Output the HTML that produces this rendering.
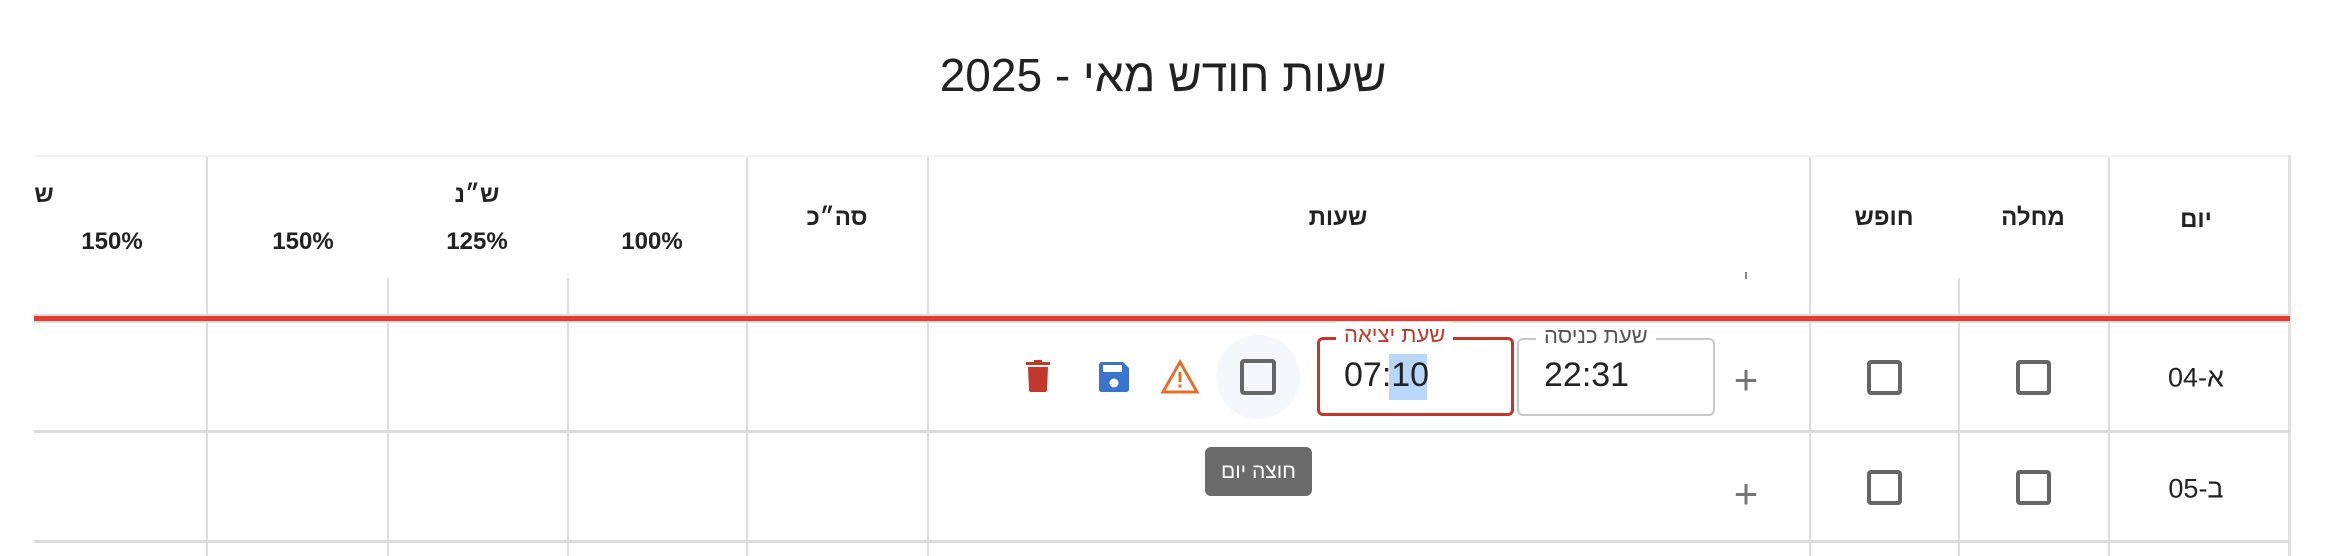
<!DOCTYPE html>
<html><head><meta charset="utf-8"><style>
*{margin:0;padding:0;box-sizing:border-box}
body{width:2344px;height:556px;background:#fff;position:relative;overflow:hidden;font-family:"Liberation Sans","Noto Sans CJK SC",sans-serif;color:#222}
.a{position:absolute}
.t{position:absolute;white-space:nowrap;transform:translate(-50%,-50%)}
.vl{position:absolute;width:2px;background:#dedede}
.hl{position:absolute;height:3px;background:#dcdcdc;left:34px;width:2256px}
.h{font-weight:bold;font-size:24px}
.cb{position:absolute;width:35px;height:35px;border:4px solid #666;border-radius:4px}
.plus{position:absolute;font-size:42px;color:#777;font-weight:300;transform:translate(-50%,-50%)}
</style></head><body>
<div class="t" style="left:1163px;top:75px;font-size:46px">שעות חודש מאי - 2025</div>

<div class="a" style="left:34px;top:155px;width:2256px;height:2px;background:#f3f3f3"></div>
<div class="a" style="left:2288px;top:155px;width:3px;height:401px;background:#e2e2e2"></div>

<div class="vl" style="left:206px;top:157px;height:399px"></div>
<div class="vl" style="left:746px;top:157px;height:399px"></div>
<div class="vl" style="left:927px;top:157px;height:399px"></div>
<div class="vl" style="left:1809px;top:157px;height:399px"></div>
<div class="vl" style="left:2108px;top:157px;height:399px"></div>
<div class="vl" style="left:387px;top:278px;height:278px"></div>
<div class="vl" style="left:567px;top:278px;height:278px"></div>
<div class="vl" style="left:1958px;top:278px;height:278px"></div>
<div class="a" style="left:1745px;top:272px;width:2px;height:7px;background:#888"></div>

<div class="t h" style="left:44px;top:195px">ש</div>
<div class="t h" style="left:112px;top:242px">150%</div>
<div class="t h" style="left:303px;top:242px">150%</div>
<div class="t h" style="left:477px;top:195px">ש״נ</div>
<div class="t h" style="left:477px;top:242px">125%</div>
<div class="t h" style="left:652px;top:242px">100%</div>
<div class="t h" style="left:837px;top:218px">סה״כ</div>
<div class="t h" style="left:1338px;top:218px">שעות</div>
<div class="t h" style="left:1884px;top:218px">חופש</div>
<div class="t h" style="left:2033px;top:218px">מחלה</div>
<div class="t h" style="left:2196px;top:220px">יום</div>

<div class="a" style="left:34px;top:314px;width:2256px;height:9px;background:#dcdcdc"></div>
<div class="a" style="left:34px;top:316px;width:2256px;height:5px;background:#ea3a2b"></div>
<div class="hl" style="top:430px"></div>
<div class="hl" style="top:540px"></div>

<div class="t" style="left:2196px;top:378px;font-size:27px">א-04</div>
<div class="cb" style="left:2016px;top:360px"></div>
<div class="cb" style="left:1867px;top:360px"></div>
<div class="plus" style="left:1746px;top:380px">+</div>

<div class="a" style="left:1517px;top:338px;width:198px;height:78px;border:2px solid #c8c8c8;border-radius:6px"></div>
<div class="a" style="left:1536px;top:323px;padding:0 8px;background:#fff;font-size:22px;color:#555">שעת כניסה</div>
<div class="a" style="left:1544px;top:356px;font-size:34px">22:31</div>

<div class="a" style="left:1317px;top:337px;width:197px;height:79px;border:3px solid #c0392b;border-radius:6px"></div>
<div class="a" style="left:1336px;top:322px;padding:0 8px;background:#fff;font-size:22px;color:#c0392b">שעת יציאה</div>
<div class="a" style="left:1389px;top:354px;width:38px;height:46px;background:#b9d6fb"></div>
<div class="a" style="left:1344px;top:356px;font-size:34px">07:10</div>

<div class="a" style="left:1216px;top:335px;width:84px;height:84px;border-radius:50%;background:#f4f8fc"></div>
<div class="cb" style="left:1240px;top:359px;width:36px;height:36px"></div>

<svg class="a" style="left:1160px;top:359px" width="40" height="35" viewBox="0 0 40 35"><path d="M20 3 L37 33 L3 33 Z" fill="none" stroke="#e2702a" stroke-width="3"/><rect x="18.5" y="13" width="3" height="10" fill="#e2702a"/><rect x="18.5" y="25.5" width="3" height="3" fill="#e2702a"/></svg>
<svg class="a" style="left:1099px;top:362px" width="30" height="30" viewBox="0 0 30 30"><path d="M3 0 H24 L30 6 V27 Q30 30 27 30 H3 Q0 30 0 27 V3 Q0 0 3 0 Z" fill="#3a74cc"/><rect x="4" y="3" width="19" height="7" fill="#fff"/><circle cx="15" cy="21" r="4.5" fill="#fff"/></svg>
<svg class="a" style="left:1026px;top:360px" width="24" height="32" viewBox="0 0 24 32"><rect x="0" y="2" width="24" height="3" fill="#c0392b"/><rect x="8" y="0" width="8" height="3" fill="#c0392b"/><path d="M2 7 H22 L21 30 Q21 32 19 32 H5 Q3 32 3 30 Z" fill="#c0392b"/></svg>

<div class="t" style="left:2196px;top:489px;font-size:27px">ב-05</div>
<div class="cb" style="left:2016px;top:470px"></div>
<div class="cb" style="left:1867px;top:470px"></div>
<div class="plus" style="left:1746px;top:494px">+</div>

<div class="a" style="left:1205px;top:447px;width:107px;height:49px;background:#6b6b6b;border-radius:6px;color:#fff;font-size:21px;text-align:center;line-height:49px">חוצה יום</div>
</body></html>
